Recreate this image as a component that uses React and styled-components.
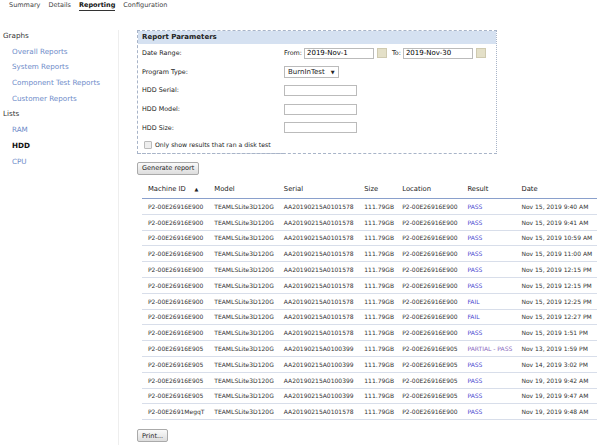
import React from 'react';
import styled, { createGlobalStyle } from 'styled-components';

const Global = createGlobalStyle`
  body { margin: 0; background: #fff; font-family: "DejaVu Sans", Verdana, sans-serif; color: #222; }
`;

const Page = styled.div`
  width: 600px;
  height: 445px;
  overflow: hidden;
`;

const Tabs = styled.div`
  display: flex;
  gap: 8px;
  padding: 1px 0 0 9px;
  font-size: 6.5px;
  height: 14px;
  color: #333;
`;

const Tab = styled.span`
  font-weight: ${p => (p.active ? 'bold' : 'normal')};
  color: ${p => (p.active ? '#111' : '#444')};
  border-bottom: ${p => (p.active ? '1px solid #333' : 'none')};
  height: 9px;
`;

const Body = styled.div`
  display: flex;
  padding-top: 15px;
`;

const Sidebar = styled.div`
  width: 118px;
  border-right: 1px solid #eee;
  height: 430px;
  padding-top: 1px;
  font-size: 7.2px;
`;

const SideHead = styled.div`
  padding-left: 3px;
  height: 15.7px;
  color: #333;
`;

const SideLink = styled.div`
  padding-left: 12px;
  height: 15.7px;
  color: ${p => (p.active ? '#111' : '#6d8bc9')};
  font-weight: ${p => (p.active ? 'bold' : 'normal')};
`;

const Main = styled.div`
  padding-left: 18px;
  display: flex;
  flex-direction: column;
`;

const ParamBox = styled.div`
  width: 358px;
  border: 1px dashed #a8b4c8;
  border-right-style: dotted;
`;

const ParamHead = styled.div`
  background: #d5e1f1;
  font-weight: bold;
  font-size: 7px;
  padding: 2px 4px;
  height: 9px;
`;

const ParamRow = styled.div`
  display: flex;
  align-items: center;
  height: 18.6px;
  font-size: 6.4px;
  padding-left: 4px;
`;

const Label = styled.span`
  width: 142px;
`;

const Field = styled.input`
  box-sizing: border-box;
  width: ${p => p.w || 73}px;
  height: 11px;
  border: 1px solid #bbb;
  font: 7px "DejaVu Sans", sans-serif;
  padding: 0 2px;
  margin: 0;
`;

const Cal = styled.span`
  display: inline-block;
  width: 8px;
  height: 8px;
  background: #e4e0c8;
  border: 1px solid #cfcab0;
  margin: 0 5px 0 3px;
`;

const Select = styled.span`
  display: inline-flex;
  align-items: center;
  gap: 6px;
  height: 10px;
  border: 1px solid #bbb;
  padding: 0 3px;
  font-size: 7px;
`;

const CheckRow = styled.div`
  display: flex;
  align-items: center;
  gap: 3px;
  font-size: 6.2px;
  padding: 4px 4px 4px 6px;
  width: 136px;
  border-bottom: 1px dashed #a8b4c8;
  margin-bottom: -1px;
`;

const Check = styled.span`
  width: 6px;
  height: 6px;
  border: 1px solid #bbb;
  background: #eee;
  border-radius: 1px;
`;

const Button = styled.button`
  align-self: flex-start;
  font: 6.5px "DejaVu Sans", sans-serif;
  color: #222;
  background: linear-gradient(#fafafa, #ddd);
  border: 1px solid #aaa;
  border-radius: 2px;
  padding: 1px 4px;
  height: 13px;
`;

const Table = styled.table`
  border-collapse: collapse;
  margin: 6px 0 9px 5px;
  width: 455px;
  font-size: 6px;
  white-space: nowrap;
  th {
    text-align: left;
    font-weight: normal;
    font-size: 6.8px;
    height: 17px;
    padding: 0 0 0 6px;
    border-bottom: 1px solid #8aa0cc;
  }
  td {
    height: 14.8px;
    padding: 0 0 0 6px;
    border-bottom: 1px solid #d8deea;
    color: #333;
  }
`;

const Result = styled.td`
  && { color: ${p => (p.partial ? '#8a6bc0' : '#4a4ad0')}; }
`;

const rows = [
  ['P2-00E26916E900', 'AA20190215A0101578', 'P2-00E26916E900', 'PASS', 'Nov 15, 2019 9:40 AM'],
  ['P2-00E26916E900', 'AA20190215A0101578', 'P2-00E26916E900', 'PASS', 'Nov 15, 2019 9:41 AM'],
  ['P2-00E26916E900', 'AA20190215A0101578', 'P2-00E26916E900', 'PASS', 'Nov 15, 2019 10:59 AM'],
  ['P2-00E26916E900', 'AA20190215A0101578', 'P2-00E26916E900', 'PASS', 'Nov 15, 2019 11:00 AM'],
  ['P2-00E26916E900', 'AA20190215A0101578', 'P2-00E26916E900', 'PASS', 'Nov 15, 2019 12:15 PM'],
  ['P2-00E26916E900', 'AA20190215A0101578', 'P2-00E26916E900', 'PASS', 'Nov 15, 2019 12:15 PM'],
  ['P2-00E26916E900', 'AA20190215A0101578', 'P2-00E26916E900', 'FAIL', 'Nov 15, 2019 12:25 PM'],
  ['P2-00E26916E900', 'AA20190215A0101578', 'P2-00E26916E900', 'FAIL', 'Nov 15, 2019 12:27 PM'],
  ['P2-00E26916E900', 'AA20190215A0101578', 'P2-00E26916E900', 'PASS', 'Nov 15, 2019 1:51 PM'],
  ['P2-00E26916E905', 'AA20190215A0100399', 'P2-00E26916E905', 'PARTIAL - PASS', 'Nov 13, 2019 1:59 PM'],
  ['P2-00E26916E905', 'AA20190215A0100399', 'P2-00E26916E905', 'PASS', 'Nov 14, 2019 3:02 PM'],
  ['P2-00E26916E905', 'AA20190215A0100399', 'P2-00E26916E905', 'PASS', 'Nov 19, 2019 9:42 AM'],
  ['P2-00E26916E905', 'AA20190215A0100399', 'P2-00E26916E905', 'PASS', 'Nov 19, 2019 9:47 AM'],
  ['P2-00E2691MegqT', 'AA20190215A0101578', 'P2-00E26916E900', 'PASS', 'Nov 19, 2019 9:48 AM'],
];

export default function App() {
  return (
    <Page>
      <Global />
      <Tabs>
        <Tab>Summary</Tab>
        <Tab>Details</Tab>
        <Tab active>Reporting</Tab>
        <Tab>Configuration</Tab>
      </Tabs>
      <Body>
        <Sidebar>
          <SideHead>Graphs</SideHead>
          <SideLink>Overall Reports</SideLink>
          <SideLink>System Reports</SideLink>
          <SideLink>Component Test Reports</SideLink>
          <SideLink>Customer Reports</SideLink>
          <SideHead>Lists</SideHead>
          <SideLink>RAM</SideLink>
          <SideLink active>HDD</SideLink>
          <SideLink>CPU</SideLink>
        </Sidebar>
        <Main>
          <ParamBox>
            <ParamHead>Report Parameters</ParamHead>
            <ParamRow>
              <Label>Date Range:</Label>
              <span style={{ marginRight: 2 }}>From:</span>
              <Field w={70} defaultValue="2019-Nov-1" />
              <Cal />
              <span style={{ marginRight: 2 }}>To:</span>
              <Field w={70} defaultValue="2019-Nov-30" />
              <Cal />
            </ParamRow>
            <ParamRow>
              <Label>Program Type:</Label>
              <Select>BurnInTest <span style={{ fontSize: 5 }}>▼</span></Select>
            </ParamRow>
            <ParamRow>
              <Label>HDD Serial:</Label>
              <Field />
            </ParamRow>
            <ParamRow>
              <Label>HDD Model:</Label>
              <Field />
            </ParamRow>
            <ParamRow>
              <Label>HDD Size:</Label>
              <Field />
            </ParamRow>
            <CheckRow><Check />Only show results that ran a disk test</CheckRow>
          </ParamBox>
          <div style={{ height: 8 }} />
          <Button>Generate report</Button>
          <Table>
            <thead>
              <tr>
                <th>Machine ID &nbsp;&nbsp;&nbsp;<span style={{ fontSize: 5 }}>▲</span></th>
                <th>Model</th>
                <th>Serial</th>
                <th>Size</th>
                <th>Location</th>
                <th>Result</th>
                <th>Date</th>
              </tr>
            </thead>
            <tbody>
              {rows.map((r, i) => (
                <tr key={i}>
                  <td>{r[0]}</td>
                  <td>TEAMLSLite3D120G</td>
                  <td>{r[1]}</td>
                  <td>111.79GB</td>
                  <td>{r[2]}</td>
                  <Result partial={r[3].startsWith('PARTIAL')}>{r[3]}</Result>
                  <td>{r[4]}</td>
                </tr>
              ))}
            </tbody>
          </Table>
          <Button>Print...</Button>
        </Main>
      </Body>
    </Page>
  );
}
